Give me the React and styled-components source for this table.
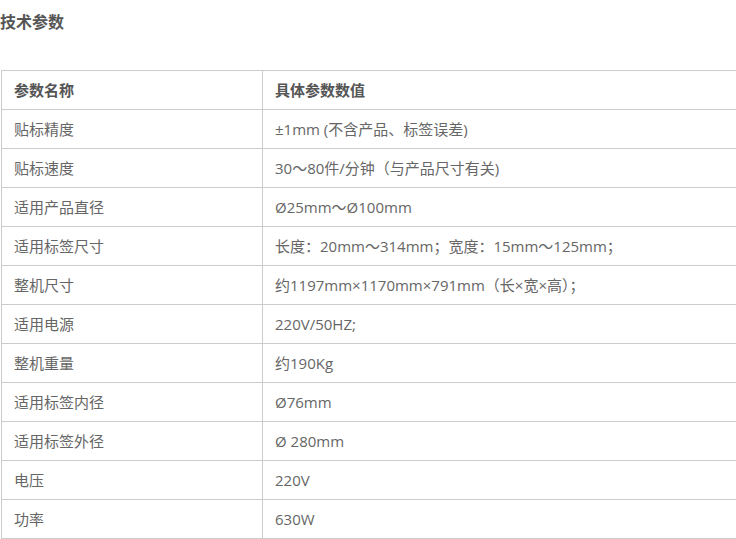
import React from 'react'
import styled, {createGlobalStyle} from "styled-components";

const GlobalStyle = createGlobalStyle`
    html, body {
        margin: 0;
        padding: 0;
        background: #fff;
        overflow: hidden;
    }
    body {
        font-family: "Open Sans", "Noto Sans CJK SC", sans-serif;
        color: #666;
    }
`;

const Page = styled.section`
    width: 736px;
    height: 539px;
    overflow: hidden;
    padding-left: 1px;
    box-sizing: border-box;
`;

const Title = styled.h3`
    margin: 0 0 0 -1px;
    padding-top: 10px;
    height: 70px;
    box-sizing: border-box;
    font-size: 16px;
    line-height: 24px;
    font-weight: bold;
    color: #555;
`;

const Table = styled.table`
    width: 760px;
    border-collapse: collapse;
    table-layout: fixed;
    font-size: 15px;
`;

const Cell = styled.td`
    border: 1px solid #ccc;
    height: 39px;
    padding: 0 12px;
    box-sizing: border-box;
    line-height: 20px;
    white-space: nowrap;
    color: ${props => props.head ? "#555" : "#666"};
    font-weight: ${props => props.head ? "bold" : "normal"};
    width: ${props => props.first ? "261px" : "auto"};
`;

const specs = [
    ["贴标精度", "±1mm (不含产品、标签误差)"],
    ["贴标速度", "30～80件/分钟（与产品尺寸有关)"],
    ["适用产品直径", "Ø25mm～Ø100mm"],
    ["适用标签尺寸", "长度：20mm～314mm；宽度：15mm～125mm；"],
    ["整机尺寸", "约1197mm×1170mm×791mm（长×宽×高）；"],
    ["适用电源", "220V/50HZ;"],
    ["整机重量", "约190Kg"],
    ["适用标签内径", "Ø76mm"],
    ["适用标签外径", "Ø 280mm"],
    ["电压", "220V"],
    ["功率", "630W"],
];

const App = () => {
    return (
        <Page>
            <GlobalStyle/>
            <Title>技术参数</Title>
            <Table>
                <tbody>
                    <tr>
                        <Cell head first>参数名称</Cell>
                        <Cell head>具体参数数值</Cell>
                    </tr>
                    {specs.map(([name, value]) =>
                        <tr key={name}>
                            <Cell first>{name}</Cell>
                            <Cell>{value}</Cell>
                        </tr>
                    )}
                </tbody>
            </Table>
        </Page>
    )
}

export default App;
